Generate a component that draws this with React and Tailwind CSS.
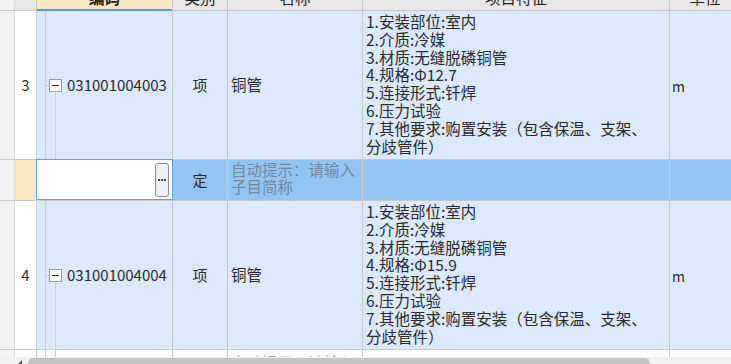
import React from 'react';

const grid = 'grid grid-cols-[15px_22px_136px_55px_135px_307px_70px]';
const line = 'border-r border-[#c9c9c9]';

const rows = [
  {
    no: '3',
    code: '031001004003',
    feats: [
      '1.安装部位:室内',
      '2.介质:冷媒',
      '3.材质:无缝脱磷铜管',
      '4.规格:Φ12.7',
      '5.连接形式:钎焊',
      '6.压力试验',
      '7.其他要求:购置安装（包含保温、支架、',
      '分歧管件）',
    ],
  },
  {
    no: '4',
    code: '031001004004',
    feats: [
      '1.安装部位:室内',
      '2.介质:冷媒',
      '3.材质:无缝脱磷铜管',
      '4.规格:Φ15.9',
      '5.连接形式:钎焊',
      '6.压力试验',
      '7.其他要求:购置安装（包含保温、支架、',
      '分歧管件）',
    ],
  },
];

function Gutter() {
  return <div className="bg-[#f2f2f2] border-r border-[#dcdcdc]" />;
}

function CodeCell({ code }) {
  return (
    <div className={`relative flex items-center pl-[12px] bg-[#dce8fc] ${line}`}>
      {/* tree connector lines */}
      <span className="absolute left-[8px] top-0 bottom-0 w-px bg-[#f6c88a]" />
      <span className="absolute left-[8px] top-1/2 w-[4px] h-px bg-[#f6c88a]" />
      <span className="absolute left-[18px] top-[calc(50%+6px)] bottom-0 w-px bg-[#f6c88a]" />
      <span className="relative flex h-[13px] w-[13px] items-center justify-center border border-[#9c9c9c] bg-white">
        <span className="h-px w-[7px] bg-[#333]" />
      </span>
      <span className="ml-[5px] text-[15px] text-[#2a2a2a]">{code}</span>
    </div>
  );
}

function DataRow({ row }) {
  return (
    <div className={`${grid} h-[149px] border-b border-[#c9c9c9]`}>
      <Gutter />
      <div className={`flex items-center justify-center bg-white text-[15px] text-[#333] ${line}`}>
        {row.no}
      </div>
      <CodeCell code={row.code} />
      <div className={`flex items-center justify-center bg-[#dce8fc] text-[15px] text-[#2a2a2a] ${line}`}>
        项
      </div>
      <div className={`flex items-center pl-[3px] bg-[#dce8fc] text-[15.5px] text-[#2a2a2a] ${line}`}>
        铜管
      </div>
      <div className={`pl-[3px] pt-[2px] bg-[#dce8fc] text-[15.5px] leading-[17.8px] text-[#2a2a2a] whitespace-nowrap overflow-hidden ${line}`}>
        {row.feats.map((f, i) => (
          <div key={i}>{f}</div>
        ))}
      </div>
      <div className="flex items-center pl-[2px] pt-[2px] bg-[#dce8fc] text-[14px] text-[#2a2a2a]">m</div>
    </div>
  );
}

function InputRow() {
  return (
    <div className={`${grid} h-[41px] border-b border-[#c9c9c9]`}>
      <Gutter />
      <div className={`bg-[#fde6c6] ${line}`} />
      <div className="relative -mt-px -ml-px flex items-center justify-end border border-[#5a9ff0] bg-white pr-[3px]">
        <button
          type="button"
          className="flex h-[34px] w-[14px] items-center justify-center gap-[1px] rounded-[3px] border border-[#8c8c8c] bg-[#edf0f6]"
        >
          <span className="h-[2px] w-[2px] bg-[#444]" />
          <span className="h-[2px] w-[2px] bg-[#444]" />
          <span className="h-[2px] w-[2px] bg-[#444]" />
        </button>
      </div>
      <div className={`flex items-center justify-center bg-[#92c5f4] text-[15px] text-[#2a2a2a] ${line}`}>
        定
      </div>
      <div className={`pl-[3px] pt-[1px] bg-[#92c5f4] text-[15.5px] leading-[17px] text-[#74889f] ${line}`}>
        自动提示：请输入
        <br />
        子目简称
      </div>
      <div className={`bg-[#92c5f4] ${line}`} />
      <div className="bg-[#92c5f4]" />
    </div>
  );
}

function PartialRow() {
  return (
    <div className={`${grid} h-[7px] overflow-hidden`}>
      <Gutter />
      <div className={`bg-white ${line}`} />
      <div className={`relative bg-white ${line}`}>
        <span className="absolute left-[8px] top-0 bottom-0 w-px bg-[#f6c88a]" />
        <span className="absolute left-[18px] top-0 bottom-0 w-px bg-[#f6c88a]" />
      </div>
      <div className={`bg-white ${line}`} />
      <div className={`bg-white pl-[3px] pt-[4px] text-[15.5px] leading-[17px] text-[#9aa6b4] ${line}`}>
        自动提示：请输入
      </div>
      <div className={`bg-white ${line}`} />
      <div className="bg-white" />
    </div>
  );
}

export default function App() {
  return (
    <div
      className="relative h-[364px] w-[731px] overflow-hidden bg-white"
      style={{ fontFamily: '"Noto Sans CJK SC", "Liberation Sans", sans-serif' }}
    >
      {/* header, top part is scrolled out of view */}
      <div className={`${grid} -mt-[14px] h-[25px] border-b border-[#c9c9c9] text-[15.5px] text-[#222]`}>
        <Gutter />
        <div className={`bg-[#e7e7e7] ${line}`} />
        <div className={`relative flex items-center justify-center bg-[#fde6c4] font-bold ${line}`}>
          编码
          <span className="absolute left-0 right-0 -bottom-px h-[2px] bg-[#4f98ee]" />
        </div>
        <div className={`flex items-center justify-center bg-[#e7e7e7] ${line}`}>类别</div>
        <div className={`flex items-center justify-center bg-[#e7e7e7] ${line}`}>名称</div>
        <div className={`flex items-center justify-center bg-[#e7e7e7] ${line}`}>项目特征</div>
        <div className="flex items-center justify-center bg-[#e7e7e7]">单位</div>
      </div>

      <DataRow row={rows[0]} />
      <InputRow />
      <DataRow row={rows[1]} />
      <PartialRow />

      {/* horizontal scrollbar */}
      <div className="flex h-[8px] items-start bg-[#f1f1f1] pl-[18px] pt-[1px]">
        <span className="mt-[2px] h-0 w-0 border-y-[4px] border-r-[4px] border-y-transparent border-r-[#555]" />
        <span className="ml-[6px] h-[10px] w-[622px] rounded-[5px] bg-[#c4c4c4]" />
      </div>
    </div>
  );
}
